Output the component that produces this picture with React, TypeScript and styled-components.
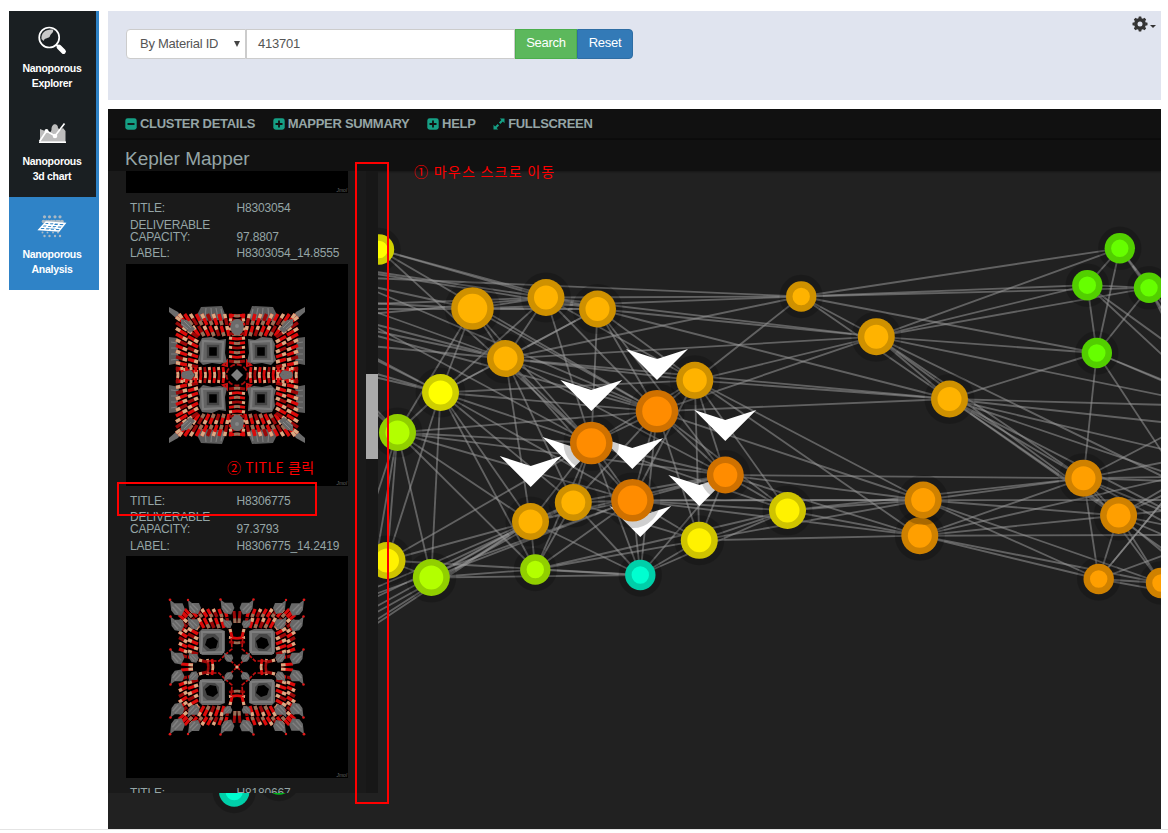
import React from "react";
import styled, { createGlobalStyle } from "styled-components";

const GlobalStyle = createGlobalStyle`
  * { box-sizing: border-box; }
  html, body { margin: 0; padding: 0; background: #fff; }
  body { font-family: "Liberation Sans", Arial, sans-serif; overflow: hidden; }
`;

const Page = styled.div`
  position: relative;
  width: 1168px;
  height: 833px;
  overflow: hidden;
`;

const Shell = styled.div`
  display: flex;
  align-items: flex-start;
  gap: 9px;
  height: 830px;
  padding: 11px 7px 0 9px;
  border-bottom: 1px solid #e4e4e4;
`;

const Sidebar = styled.nav`
  flex: none;
  width: 90px;
`;

const NavItem = styled.a<{ $active?: boolean }>`
  display: flex;
  flex-direction: column;
  align-items: center;
  height: 93px;
  padding: 14px 4px 0 ${(p) => (p.$active ? 0 : 3)}px;
  border-right: ${(p) => (p.$active ? 0 : 3)}px solid #2f83c7;
  background: ${(p) => (p.$active ? "#2f83c7" : "#1a1f22")};
  color: #fff;
  font-size: 10.5px;
  font-weight: bold;
  letter-spacing: -0.28px;
  line-height: 15px;
  text-align: center;
  svg { display: block; margin-bottom: 6px; flex: none; }
`;

const Main = styled.main`
  flex: 1;
  display: flex;
  flex-direction: column;
  gap: 9px;
  min-width: 0;
`;

const SearchBar = styled.section`
  display: flex;
  justify-content: space-between;
  align-items: flex-start;
  height: 89px;
  padding: 18px 5px 0 18px;
  background: #e0e4ef;
`;

const SearchForm = styled.div`
  display: flex;
  height: 30px;
  font-size: 13px;
  letter-spacing: -0.25px;
  color: #555;
`;

const SelectBox = styled.div`
  display: flex;
  align-items: center;
  width: 120px;
  padding: 0 4px 2px 13px;
  background: #fff;
  border: 1px solid #ccc;
  border-radius: 4px 0 0 4px;
`;

const SelectValue = styled.span`
  flex: none;
  width: 78px;
  overflow: hidden;
  white-space: nowrap;
`;

const SelectArrow = styled.i`
  margin: 2px 0 0 16px;
  border: 3px solid transparent;
  border-top: 6px solid #444;
  border-bottom: 0;
`;

const TextInput = styled.div`
  display: flex;
  align-items: center;
  width: 269px;
  padding: 0 0 2px 11px;
  background: #fff;
  border: 1px solid #ccc;
`;

const Button = styled.button<{ $tone: string; $edge: string; $width: number; $last?: boolean }>`
  width: ${(p) => p.$width}px;
  padding: 0 0 3px;
  border: 1px solid ${(p) => p.$edge};
  border-radius: ${(p) => (p.$last ? "0 4px 4px 0" : "0")};
  background: ${(p) => p.$tone};
  color: #fff;
  font: 13px "Liberation Sans", Arial, sans-serif;
  letter-spacing: -0.25px;
`;

const Settings = styled.div`
  display: flex;
  align-items: center;
  gap: 2px;
  margin-top: -13px;
  color: #333;
`;

const Caret = styled.i`
  margin-top: 4px;
  border: 3.5px solid transparent;
  border-top-color: #333;
  border-bottom: 0;
`;

const Visualizer = styled.section`
  display: grid;
  grid-template: 720px / 1053px;
  background: #212121;
  overflow: hidden;
`;

const Graph = styled.svg`
  grid-area: 1 / 1;
  display: block;
`;

const Overlay = styled.div`
  grid-area: 1 / 1;
  z-index: 1;
`;

const Toolbar = styled.header`
  display: flex;
  align-items: center;
  gap: 17.6px;
  height: 31px;
  padding: 0 0 0 17px;
  background: #111;
  border-bottom: 2px solid #0c0c0c;
`;

const Tool = styled.a`
  display: flex;
  align-items: center;
  gap: 3px;
  color: #95a5a6;
  font-size: 13px;
  font-weight: bold;
  letter-spacing: -0.3px;
  white-space: nowrap;
  svg { color: #16a085; flex: none; }
`;

const TitleBar = styled.div`
  height: 31px;
  padding: 8px 0 0 17px;
  background: #111;
  box-shadow: 0 1px 2px rgba(0, 0, 0, 0.35);
  color: #95a5a6;
  font-size: 19px;
  line-height: 22px;
`;

const Details = styled.aside`
  position: relative;
  display: flex;
  justify-content: space-between;
  width: 270px;
  height: 622px;
  background: #1a1a1a;
  overflow: hidden;
`;

const MemberList = styled.div`
  width: 222px;
  margin: -200px 0 0 18px;
`;

const ScrollTrack = styled.div`
  width: 12px;
  padding-top: 203px;
  background: #171717;
`;

const ScrollThumb = styled.div`
  height: 85px;
  background: #a9a9a9;
`;

const Picture = styled.div`
  display: flex;
  width: 222px;
  height: 222px;
  position: relative;
  background: #000;
`;

const Watermark = styled.span`
  position: absolute;
  right: 1px;
  bottom: 0;
  color: #666;
  font-size: 5px;
  font-style: italic;
  line-height: 6px;
`;

const Facts = styled.dl`
  display: grid;
  grid-template-columns: 106.5px 1fr;
  grid-auto-rows: min-content;
  row-gap: 4.4px;
  align-items: end;
  height: 70.5px;
  margin: 0;
  padding: 9.3px 0 0 4px;
  color: #95a5a6;
  font-size: 12px;
  letter-spacing: -0.17px;
  line-height: 12px;
  dt, dd { margin: 0; white-space: nowrap; }
`;

const RedFrame = styled.div<{ $x: number; $y: number; $w: number; $h: number }>`
  position: absolute;
  z-index: 3;
  left: ${(p) => p.$x}px;
  top: ${(p) => p.$y}px;
  width: ${(p) => p.$w}px;
  height: ${(p) => p.$h}px;
  border: 2px solid #f00;
`;

const RedNote = styled.div<{ $x: number; $y: number; $track: number }>`
  position: absolute;
  z-index: 3;
  left: ${(p) => p.$x}px;
  top: ${(p) => p.$y}px;
  color: #f00;
  font: 400 14px/18px "Noto Sans CJK KR", sans-serif;
  letter-spacing: ${(p) => p.$track}px;
  white-space: nowrap;
`;

const AMBER = "#ffb300";
const ORANGE = "#ff8c00";
const GOLD = "#ff9f00";
const LIME = "#b3ff00";
const GREEN = "#66ff00";
const YELLOW = "#ffff00";
const SUN = "#fff200";
const TEAL = "#00ffd0";

type GraphNode = [number, number, number, string];

const nodes: Record<string, GraphNode> = {
  y1: [379, 249.5, 15.2, YELLOW],
  o1: [472.5, 308.5, 21.3, AMBER],
  o2: [546, 297.5, 18.5, AMBER],
  o3: [597.5, 309, 18.5, AMBER],
  o4: [505.5, 358.5, 18.5, AMBER],
  y2: [440.5, 392.5, 18.5, YELLOW],
  g1: [397.5, 432.5, 18.5, LIME],
  o6: [573.3, 502.5, 18.5, AMBER],
  o7: [530.5, 521.5, 18.5, AMBER],
  r1: [591.3, 443, 21.3, ORANGE],
  r2: [657, 411.3, 21.3, ORANGE],
  o5: [694.8, 380.3, 18.5, AMBER],
  r3: [725.3, 475, 18.5, ORANGE],
  r4: [632.5, 500.3, 21.3, ORANGE],
  y3: [387, 560.5, 18.5, SUN],
  g2: [431.3, 577.5, 18.5, LIME],
  g3: [535.3, 569.5, 15.2, LIME],
  t1: [640.3, 575, 15.2, TEAL],
  y4: [699.3, 540.3, 18.5, SUN],
  y5: [787.5, 510.5, 18.5, SUN],
  o8: [801.2, 296.5, 15.2, AMBER],
  o9: [876.3, 336.7, 18.5, AMBER],
  o10: [949.5, 399, 18.5, AMBER],
  n1: [1119.8, 248.3, 15.2, GREEN],
  n2: [1087.3, 285.2, 15.2, GREEN],
  n3: [1149, 287.8, 15.2, GREEN],
  n4: [1096.8, 353, 15.2, GREEN],
  a1: [1083.5, 478.2, 18.5, GOLD],
  a2: [1118.6, 515.5, 18.5, GOLD],
  a3: [1098.7, 579, 15.2, GOLD],
  a4: [1161, 583, 15.2, GOLD],
  a6: [919.8, 535.7, 18.5, GOLD],
  a5: [923.2, 500, 18.5, GOLD],
  t2: [234.2, 791.5, 15.2, TEAL],
  g4: [279, 779.5, 15.2, "#00e020"],
};

const links: Record<string, string> = {
  y1: "o2 o3 r1 r2",
  o1: "o2 o3 o4 y2 g1 r1 r2 o8",
  o2: "o3 o4 y2 r1 r2 o5 o8 o9",
  o3: "o4 y2 r1 r2 o5 o9 o10 r3",
  o4: "y2 r1 r2 o5 o6 o7 r4 r3 o8 o9 o10",
  y2: "r1 r2 o5 r4 o6 o7 g3 g2 y3 g1",
  g1: "r2 r1 r3 r4 o7 g3 g2 y3",
  r1: "r2 o5 r3 r4 o6 o7 y5 t1 g3",
  r2: "o5 r3 r4 o6 y4 y5 a5 t1 o10 o9",
  o5: "o8 o9 o10 r3 y4 y5 a5 a6 r4",
  r3: "y4 y5 a5 a6 a1 r4 o7 t1",
  r4: "o6 o7 y4 y5 a5 a6 t1 g3",
  o6: "o7 g3 t1 y4 r3",
  o7: "g3 t1 y3 g2",
  y3: "g2 t1 r1",
  g2: "g3 t1 r4",
  g3: "t1 y4 y5",
  t1: "y4 y5",
  y4: "y5 a5 a6",
  y5: "a5 a6 a1",
  o8: "o9 o10 n1 n2 n3 n4",
  o9: "n1 n2 n3 n4 o10 a1 a2",
  o10: "n4 a1 a2",
  a5: "a1 a2 a3 a4",
  a6: "a1 a2 a3 a4",
  a1: "a2 a3 a4 n4",
  a2: "a3 a4",
  a3: "a4",
  n1: "n2 n3 n4",
  n2: "n3 n4",
  n3: "n4",
};

// Links whose other end is outside the visible canvas: [node, x, y].
const outgoing: [string, number, number][] = [
  ["o2", 370, 271], ["o3", 370, 273], ["o8", 370, 278], ["o1", 370, 286], ["r2", 370, 289],
  ["o1", 370, 303], ["o2", 370, 304], ["o3", 370, 309], ["o2", 370, 314],
  ["o4", 370, 310], ["o4", 370, 323], ["r1", 370, 324], ["o4", 370, 330], ["r2", 370, 334],
  ["o4", 370, 346], ["y2", 370, 355], ["y2", 370, 357], ["y2", 370, 372],
  ["y2", 370, 376], ["g1", 370, 403], ["g1", 370, 408], ["g1", 370, 516], ["g1", 376, 560],
  ["o7", 370, 590], ["r4", 370, 596], ["o6", 370, 600], ["o7", 370, 610],
  ["o6", 370, 616], ["o7", 370, 624], ["o7", 370, 628],
  ["o9", 1170, 397], ["o9", 1170, 480], ["o10", 1170, 405], ["o10", 1170, 423],
  ["o10", 1170, 451], ["o10", 1170, 474], ["o10", 1170, 512],
  ["o10", 1170, 554], ["a1", 1170, 433], ["a1", 1170, 461], ["a1", 1170, 477],
  ["a1", 1170, 481], ["a1", 1170, 514], ["a1", 1170, 525], ["a2", 1170, 485],
  ["a2", 1170, 492], ["a2", 1170, 510], ["a2", 1170, 526], ["a2", 1170, 538], ["a2", 1170, 558],
  ["a3", 1170, 493], ["a3", 1170, 553], ["a3", 1170, 592], ["a6", 1170, 478],
  ["a6", 1170, 535], ["r4", 1170, 500], ["n1", 1170, 313], ["n1", 1170, 321],
  ["n2", 1170, 345], ["n2", 1170, 362], ["n3", 1170, 322], ["n3", 1170, 330],
  ["n4", 1170, 383], ["n4", 1170, 384], ["n4", 1170, 464], ["a3", 1170, 493],
];

const arrows: [number, number][] = [
  [591.3, 411], [657, 380], [725.3, 441], [632.3, 469], [573.5, 468],
  [530.7, 487], [699.3, 506], [640.3, 537],
];

function ClusterGraph() {
  return (
    <Graph width="1053" height="720" viewBox="108 109 1053 720">
      <g stroke="#9b9b9b" strokeOpacity="0.53" strokeWidth="1.85">
        {Object.entries(links).flatMap(([from, list]) =>
          list.split(" ").map((to) => (
            <line
              key={from + to}
              x1={nodes[from][0]}
              y1={nodes[from][1]}
              x2={nodes[to][0]}
              y2={nodes[to][1]}
            />
          ))
        )}
        {outgoing.map(([from, x, y], i) => (
          <line key={i} x1={nodes[from][0]} y1={nodes[from][1]} x2={x} y2={y} />
        ))}
      </g>
      <g fill="#fff">
        {arrows.map(([x, y], i) => (
          <path key={i} d="M-31-31L0-21L31-31L0 0Z" transform={`translate(${x} ${y})`} />
        ))}
      </g>
      <g stroke="#000" strokeOpacity="0.19" strokeWidth="13">
        {Object.entries(nodes).map(([id, [x, y, r, fill]]) => (
          <circle key={id} cx={x} cy={y} r={r} fill={fill} />
        ))}
      </g>
    </Graph>
  );
}

type Rod = [number, number, number, number];

// Rods of one quadrant (right, up), leaning outwards as seen in perspective.
function fanRods(outer: number, step: number): Rod[] {
  const rods: Rod[] = [];
  const bands = [[39, 49], [50, outer]];
  bands.forEach(([near, far], band) => {
    for (let t = 3 + band * 2; t < near + 2; t += step) {
      const lean = t * 0.14 + 1;
      rods.push([t, -near, t + lean, -far]);
      rods.push([near, -t, far, -t - lean]);
    }
  });
  return rods;
}

function crossRods(from: number): Rod[] {
  const rods: Rod[] = [];
  for (let d = from; d < 60; d += 4.6) {
    rods.push([0, -d, 8, -d - 1]);
    rods.push([d, 0, d + 1, -8]);
  }
  return rods;
}

const quadrants = ["", "scale(-1 1)", "scale(1 -1)", "scale(-1 -1)"];

function Rods({ rods, width }: { rods: Rod[]; width: number }) {
  return (
    <>
      {rods.map(([x1, y1, x2, y2], i) => {
        const odd = Math.floor(i / 2) % 2 === 1;
        const from = odd ? 0.62 : 0;
        const to = odd ? 1 : 0.38;
        return (
          <g key={i} strokeWidth={width}>
            <line x1={x1} y1={y1} x2={x2} y2={y2} stroke={i % 3 ? "#dc0a0a" : "#9c0808"} />
            <line
              x1={x1 + (x2 - x1) * from}
              y1={y1 + (y2 - y1) * from}
              x2={x1 + (x2 - x1) * to}
              y2={y1 + (y2 - y1) * to}
              stroke={i % 4 ? "#d8ab84" : "#94735a"}
            />
          </g>
        );
      })}
    </>
  );
}

function DenseFramework() {
  return (
    <svg width="222" height="222" viewBox="-111 -111 222 222">
      {quadrants.map((q) => (
        <g key={q} transform={q || undefined}>
          <path d="M11-58L15-69L36-68L40-60L36-54L14-55Z M58-12L68-10L68-38L60-37Z" fill="#5c5c5c" />
          <path d="M16-66L14-57M21-67L19-57M26-67L25-57M31-67L32-57M66-15L59-16M66-21L59-21M66-27L59-27M66-33L60-32" stroke="#7d7d7d" strokeWidth="1.200" />
          <path d="M68-68L59-63L54-56L60-56L68-63Z" fill="#6c6c6c" />
          <Rods rods={fanRods(61, 5)} width={3.4} />
          <Rods rods={crossRods(13)} width={2.8} />
          <path d="M10-9L10-14L14-10Z" stroke="#c91010" strokeWidth="2" fill="none" />
          <path d="M42-46L50-55L56-56L56-50L47-42Z" fill="#686868" />
          <path d="M46-47L53-54M49-46L55-51" stroke="#888" strokeWidth="1" />
          <path d="M11-36L18-35L25-38L35-37L38-31L37-22L39-15L34-10L25-12L17-11L10-13L12-22Z" fill="#636363" />
          <path d="M14-33L34-34L35-14L15-14Z" fill="none" stroke="#7c7c7c" strokeWidth="2.200" />
          <path d="M19-29H29V-18H19Z" fill="#000" stroke="#444" strokeWidth="2.400" />
          <ellipse cx="0" cy="-48" rx="6.500" ry="8" fill="#6c6c6c" />
          <path d="M42 0L46-5L55-3L56 0Z" fill="#6c6c6c" />
          <circle cx="0" cy="-49" r="2" fill="#858585" />
        </g>
      ))}
      <circle r="10.500" fill="#000" stroke="#a90d0d" strokeWidth="1.800" strokeDasharray="5 2" />
      <path d="M0-6L6 0L0 6L-6 0Z" fill="#808080" />
    </svg>
  );
}

const knobs: [number, number, number][] = [
  [59, -58, 8], [42, -59, 7], [9, -59, 7.5], [59, -42, 7.5], [43, -43, 6.5],
  [59, -9, 7.5], [43, -9, 5.5], [8, -9, 5], [9, -43, 5],
];

function OpenFramework() {
  return (
    <svg width="222" height="222" viewBox="-111 -111 222 222">
      {quadrants.map((q) => (
        <g key={q} transform={q || undefined}>
          <Rods rods={fanRods(58, 5).filter(([x, y]) => x > 7 && y < -7)} width={3.3} />
          <Rods rods={crossRods(24).filter((r) => Math.abs(r[0]) + Math.abs(r[1]) < 32)} width={2.6} />
          <Rods rods={[[2, -44, 3, -56], [44, -2, 56, -3], [5, -30, 7, -38], [30, -5, 38, -7]]} width={3} />
          <path d="M0 0L9-9M12-12L5-18L6-32M12-12L18-6L32-6" stroke="#c01010" strokeWidth="1.700" fill="none" strokeDasharray="4 1.500" />
          {knobs.map(([x, y, s], i) => (
            <g key={i} transform={`translate(${x} ${y}) scale(${s / 7})`}>
              <path d="M7-8L3-5L-4-5L-6 0L-3 6L3 5L6 1Z" fill="#686868" />
              <path d="M3-4L-3 2M5-2L0 4" stroke="#808080" strokeWidth="1.300" />
              {(i < 4 || i === 5) && <circle cx="7" cy="-8" r="1.200" fill="#e01818" />}
            </g>
          ))}
          <path d="M12-36L17-38L35-38L38-35L38-15L35-12L15-12L12-16Z" fill="#666" />
          <path d="M14-35L35-35L36-14L14-15Z" fill="none" stroke="#7d7d7d" strokeWidth="2" />
          <path d="M18-29L22-33H30L34-29V-20L30-16H22L18-20Z" fill="#464646" />
          <path d="M19-26L24-30L30-28L32-22L27-18L21-19Z" fill="#000" />
        </g>
      ))}
      <circle r="1.600" fill="#dfb48d" />
    </svg>
  );
}

function Member(props: { title: string; capacity?: string; label?: string }) {
  return (
    <Facts>
      <dt>TITLE:</dt>
      <dd>{props.title}</dd>
      {props.capacity && (
        <>
          <dt>DELIVERABLE<br />CAPACITY:</dt>
          <dd>{props.capacity}</dd>
        </>
      )}
      {props.label && (
        <>
          <dt>LABEL:</dt>
          <dd>{props.label}</dd>
        </>
      )}
    </Facts>
  );
}

function ToggleIcon({ open }: { open?: boolean }) {
  return (
    <svg width="12" height="12" viewBox="0 0 12 12">
      <rect x="0.300" y="0.300" width="11.400" height="11.400" rx="2.400" fill="currentColor" />
      <path d={open ? "M2.500 6H9.500" : "M2.500 6H9.500M6 2.500V9.500"} stroke="#111" strokeWidth="1.800" />
    </svg>
  );
}

function ExpandIcon() {
  return (
    <svg width="12" height="12" viewBox="0 0 12 12" fill="currentColor">
      <path d="M6.800 0.500H11.500V5.200L9.900 3.600L7.400 6.100L5.900 4.600L8.400 2.100ZM0.500 6.800V11.500H5.200L3.600 9.900L6.100 7.400L4.600 5.900L2.100 8.400Z" />
    </svg>
  );
}

function GearIcon() {
  return (
    <svg width="16" height="16" viewBox="-8 -8 16 16">
      <circle r="4.200" fill="none" stroke="currentColor" strokeWidth="3.400" />
      {[0, 45, 90, 135, 180, 225, 270, 315].map((angle) => (
        <path key={angle} d="M-1.700-5.300L-1.200-7.500H1.200L1.700-5.300Z" fill="currentColor" transform={`rotate(${angle})`} />
      ))}
    </svg>
  );
}

function ExplorerIcon() {
  return (
    <svg width="30" height="30" viewBox="0 0 30 30">
      <path d="M4.500 14C4 8 8 4 16 4.500C17 8 14 8 13 11C12 14 8 12 6.500 16Z" fill="#c8c8c8" />
      <circle cx="12.200" cy="12.500" r="10" fill="none" stroke="#fff" strokeWidth="1.700" />
      <path d="M19 19.500L22 22" stroke="#fff" strokeWidth="2" />
      <path d="M22 22L26.500 26.500" stroke="#fff" strokeWidth="4.800" strokeLinecap="round" />
    </svg>
  );
}

function ChartIcon() {
  return (
    <svg width="30" height="30" viewBox="0 0 30 30">
      <path d="M3 24V11L8 13L13 15L14.500 12C14 5 21 4.500 21 10L23 12L26 10L28.500 13V24Z" fill="#bdbdbd" />
      <path d="M2.500 23.500L9.500 13L18 18L27.500 5.500" fill="none" stroke="#fff" strokeWidth="1.700" />
      <circle cx="9.500" cy="13" r="2" fill="#fff" />
      <circle cx="18" cy="18" r="2.300" fill="#fff" />
      <path d="M2 24.200H29" stroke="#fff" strokeWidth="1.600" />
    </svg>
  );
}

function AnalysisIcon() {
  return (
    <svg width="30" height="30" viewBox="0 0 30 30">
      <g fill="#a9b8c4">
        {[7.5, 12.5, 18, 23].map((x) => (
          <React.Fragment key={x}>
            <circle cx={x} cy="5.800" r="1.600" />
            <circle cx={x - 1} cy="10.500" r="1.800" />
            <circle cx={x + 2} cy="10.500" r="1.800" />
            <circle cx={x} cy="25" r="1.200" />
            <circle cx={x - 2} cy="21.500" r="1" />
          </React.Fragment>
        ))}
      </g>
      <path d="M9 11L28 12.500L22 20L2 18.500ZM7 13.500L26 15M4.500 16L24 17.500M13.500 11L7 19M18 11.500L12 19.500M23 11.800L17 19.800" fill="none" stroke="#fff" strokeWidth="1.500" />
    </svg>
  );
}

export default function App() {
  return (
    <>
      <GlobalStyle />
      <Page>
        <Shell>
          <Sidebar>
            <NavItem><ExplorerIcon />Nanoporous<br />Explorer</NavItem>
            <NavItem><ChartIcon />Nanoporous<br />3d chart</NavItem>
            <NavItem $active><AnalysisIcon />Nanoporous<br />Analysis</NavItem>
          </Sidebar>
          <Main>
            <SearchBar>
              <SearchForm>
                <SelectBox>
                  <SelectValue>By Material ID</SelectValue>
                  <SelectArrow />
                </SelectBox>
                <TextInput>413701</TextInput>
                <Button $tone="#5cb85c" $edge="#4cae4c" $width={62}>Search</Button>
                <Button $tone="#337ab7" $edge="#2e6da4" $width={56} $last>Reset</Button>
              </SearchForm>
              <Settings><GearIcon /><Caret /></Settings>
            </SearchBar>
            <Visualizer>
              <ClusterGraph />
              <Overlay>
                <Toolbar>
                  <Tool><ToggleIcon open />CLUSTER DETAILS</Tool>
                  <Tool><ToggleIcon />MAPPER SUMMARY</Tool>
                  <Tool><ToggleIcon />HELP</Tool>
                  <Tool><ExpandIcon />FULLSCREEN</Tool>
                </Toolbar>
                <TitleBar>Kepler Mapper</TitleBar>
                <Details>
                  <MemberList>
                    <Picture><Watermark>Jmol</Watermark></Picture>
                    <Member title="H8303054" capacity="97.8807" label="H8303054_14.8555" />
                    <Picture><DenseFramework /><Watermark>Jmol</Watermark></Picture>
                    <Member title="H8306775" capacity="97.3793" label="H8306775_14.2419" />
                    <Picture><OpenFramework /><Watermark>Jmol</Watermark></Picture>
                    <Member title="H8180667" />
                  </MemberList>
                  <ScrollTrack><ScrollThumb /></ScrollTrack>
                </Details>
              </Overlay>
            </Visualizer>
          </Main>
        </Shell>
        <RedFrame $x={355} $y={162} $w={34} $h={642} />
        <RedFrame $x={117} $y={482} $w={200} $h={34} />
        <RedNote $x={414} $y={162} $track={1.25}>① 마우스 스크로 이동</RedNote>
        <RedNote $x={227} $y={458} $track={0.5}>② TITLE 클릭</RedNote>
      </Page>
    </>
  );
}
